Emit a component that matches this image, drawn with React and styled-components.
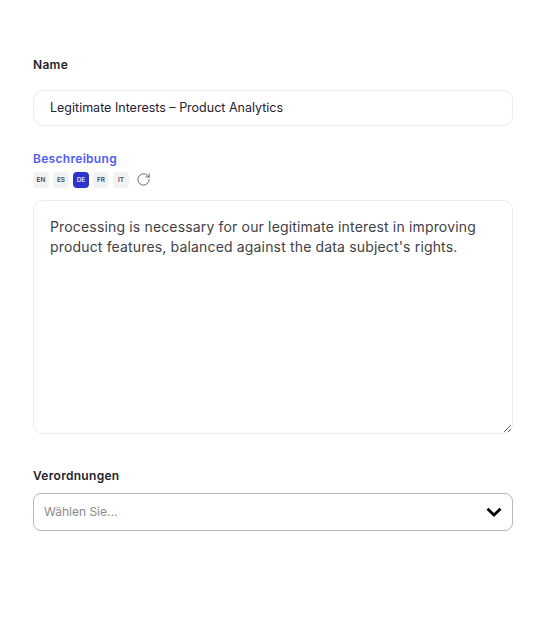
import React from 'react';
import styled, { createGlobalStyle } from 'styled-components';
import { RotateCw } from 'lucide-react';

const GlobalStyle = createGlobalStyle`
  html, body {
    margin: 0;
    padding: 0;
    background: #ffffff;
    font-family: Inter, "Liberation Sans", sans-serif;
  }
  * {
    box-sizing: border-box;
  }
`;

const Form = styled.form`
  width: 544px;
  height: 643px;
  padding: 57px 31px 0 33px;
  display: flex;
  flex-direction: column;
`;

const Label = styled.label`
  display: block;
  font-size: 12px;
  line-height: 16px;
  letter-spacing: 0.3px;
  font-weight: 600;
  color: ${(props) => (props.$active ? '#4c5cf5' : '#1c1f2b')};
`;

const NameInput = styled.input`
  display: block;
  width: 480px;
  height: 36px;
  margin: 17px 0 25px;
  padding: 0 16px 2px;
  border: 1px solid #ececee;
  border-radius: 10px;
  outline: none;
  font-family: inherit;
  font-size: 12.5px;
  color: #1f2230;
  background: #fff;
`;

const LangRow = styled.div`
  display: flex;
  align-items: center;
  gap: 4px;
  margin-top: 5px;
  height: 16px;
`;

const LangButton = styled.button`
  width: 16px;
  height: 16px;
  padding: 0;
  border: 0;
  border-radius: 4px;
  font-family: inherit;
  font-size: 6.5px;
  font-weight: 600;
  color: ${(props) => (props.$active ? '#dfe3ff' : '#454a57')};
  background: ${(props) => (props.$active ? '#2b35c9' : '#f1f2f4')};
`;

const Reload = styled.span`
  display: flex;
  margin: -2px 0 0 3px;
  color: #5c5c5c;
`;

const Description = styled.textarea`
  display: block;
  width: 480px;
  height: 234px;
  margin: 12px 0 34px;
  padding: 16px;
  border: 1px solid #ececee;
  border-radius: 10px;
  outline: none;
  font-family: inherit;
  font-size: 14px;
  line-height: 20px;
  letter-spacing: 0.16px;
  color: #3f3f46;
  background: #fff;
`;

const SelectBox = styled.div`
  width: 480px;
  height: 38px;
  margin-top: 9px;
  padding: 0 10px 2px;
  display: flex;
  align-items: center;
  justify-content: space-between;
  border: 1px solid #b9b9b9;
  border-radius: 8px;
`;

const Placeholder = styled.span`
  font-size: 12px;
  color: #8a8a8f;
`;

const Chevron = styled.svg`
  width: 16px;
  height: 10px;
  margin-top: 2px;
`;

const languages = ['EN', 'ES', 'DE', 'FR', 'IT'];

const App = () => {
  return (
    <>
      <GlobalStyle />
      <Form>
        <Label>Name</Label>
        <NameInput defaultValue="Legitimate Interests – Product Analytics" />
        <Label $active>Beschreibung</Label>
        <LangRow>
          {languages.map((lang) => (
            <LangButton type="button" key={lang} $active={lang === 'DE'}>
              {lang}
            </LangButton>
          ))}
          <Reload>
            <RotateCw size={15} strokeWidth={1.5} />
          </Reload>
        </LangRow>
        <Description defaultValue="Processing is necessary for our legitimate interest in improving product features, balanced against the data subject's rights." />
        <Label>Verordnungen</Label>
        <SelectBox>
          <Placeholder>Wählen Sie...</Placeholder>
          <Chevron viewBox="0 0 16 10" fill="none">
            <path d="M1.5 1.8L8 8l6.5-6.2" stroke="#000" strokeWidth="2.8" />
          </Chevron>
        </SelectBox>
      </Form>
    </>
  );
};

export default App;
